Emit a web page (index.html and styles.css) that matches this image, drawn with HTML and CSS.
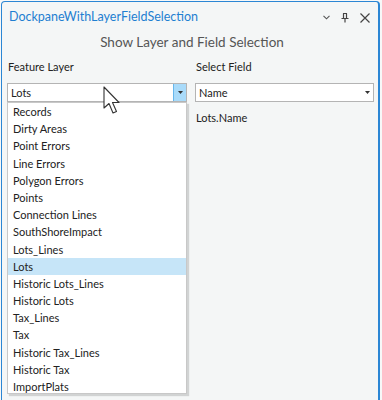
FILE: index.html
```html
<!DOCTYPE html>
<html>
  <head>
    <meta charset="utf-8">
    <title>DockpaneWithLayerFieldSelection</title>
    <link rel="stylesheet" href="styles.css">
  </head>
  <body>
    <div class="pane">
      <div class="titlebar">
        <span class="title">DockpaneWithLayerFieldSelection</span>
        <div class="controls">
          <svg width="7" height="5" viewBox="0 0 7 5"><path d="M0.5 0.8 L3.5 3.8 L6.5 0.8" fill="none" stroke="#555" stroke-width="1.1"/></svg>
          <svg width="8" height="10" viewBox="0 0 8 10"><path d="M2 0.5 H6 M2.5 0.5 V5 M5.5 0.5 V5 M0.5 5.5 H7.5 M4 5.5 V9.5" fill="none" stroke="#444" stroke-width="1.2"/></svg>
          <svg width="10" height="10" viewBox="0 0 10 10"><path d="M0.5 0.5 L9.5 9.5 M9.5 0.5 L0.5 9.5" fill="none" stroke="#444" stroke-width="1.2"/></svg>
        </div>
      </div>
      <div class="heading">Show Layer and Field Selection</div>
      <div class="fields">
        <div class="field">
          <label class="label">Feature Layer</label>
          <div class="combo">
            <span class="combo-text">Lots</span>
            <span class="drop drop-hot"><svg width="5" height="3" viewBox="0 0 5 3"><path d="M0 0 H5 L2.5 3 Z" fill="#333"/></svg></span>
          </div>
          <ul class="dropdown">
            <li>Records</li>
            <li>Dirty Areas</li>
            <li>Point Errors</li>
            <li>Line Errors</li>
            <li>Polygon Errors</li>
            <li>Points</li>
            <li>Connection Lines</li>
            <li>SouthShoreImpact</li>
            <li>Lots_Lines</li>
            <li class="selected">Lots</li>
            <li>Historic Lots_Lines</li>
            <li>Historic Lots</li>
            <li>Tax_Lines</li>
            <li>Tax</li>
            <li>Historic Tax_Lines</li>
            <li>Historic Tax</li>
            <li>ImportPlats</li>
          </ul>
        </div>
        <div class="field">
          <label class="label">Select Field</label>
          <div class="combo">
            <span class="combo-text">Name</span>
            <span class="drop"><svg width="5" height="3" viewBox="0 0 5 3"><path d="M0 0 H5 L2.5 3 Z" fill="#333"/></svg></span>
          </div>
          <div class="value">Lots.Name</div>
        </div>
      </div>
    </div>
    <!-- mouse pointer over the combo -->
    <svg class="pointer" width="20" height="30" viewBox="0 0 20 30">
      <path d="M1 1 L1 22 L6 17.5 L10 27 L13.5 25.5 L9.5 16.5 L16 16.5 Z" fill="#fff" stroke="#333" stroke-width="1.1" stroke-linejoin="round"/>
    </svg>
  </body>
</html>
```
FILE: styles.css
```css
html, body {
margin: 0;
padding: 0;
}

body {
font-family: Lato, "Noto Sans", sans-serif;
font-size: 11px;
color: #222;
background: #f7f8f8;
width: 382px;
height: 400px;
overflow: hidden;
}

.pane {
margin: 1px 0 0 1px;
width: 376px;
height: 420px;
border: 1px solid #2b86d4;
border-right-width: 2px;
border-radius: 4px 4px 0 0;
background: #f4f6f6;
}

.titlebar {
display: flex;
align-items: center;
justify-content: space-between;
height: 29px;
padding: 0 8px 0 7px;
}

.title {
font-size: 12.5px;
color: #1f7fd1;
}

.controls {
display: flex;
align-items: center;
gap: 11px;
padding-top: 2px;
}

.heading {
text-align: center;
font-size: 13.5px;
color: #555;
height: 24px;
line-height: 22px;
padding-left: 4px;
}

.fields {
display: flex;
gap: 8px;
padding: 0 5px 0 5px;
}

.field {
position: relative;
flex: 0 0 180px;
display: flex;
flex-direction: column;
}

.field + .field {
flex: 0 0 179px;
}

.label {
display: block;
height: 28px;
line-height: 24px;
padding-left: 1px;
}

.combo {
display: flex;
align-items: center;
justify-content: space-between;
height: 17px;
border: 1px solid #b4b4b4;
background: #fff;
}

.combo-text {
padding-left: 3px;
}

.drop {
display: flex;
align-items: center;
justify-content: center;
width: 12px;
height: 17px;
}

.drop-hot {
background: #a9dbfa;
border-left: 1px solid #67b7ec;
}

.value {
padding: 9px 0 0 1px;
}

.dropdown {
position: absolute;
top: 47px;
left: 0;
width: 178px;
height: 290px;
margin: 0;
padding: 0;
list-style: none;
background: #fff;
border: 1px solid #c8c8c8;
box-shadow: 2px 2px 1px rgba(0, 0, 0, 0.14);
}

.dropdown li {
height: 17.2px;
line-height: 17px;
padding-left: 5px;
}

.dropdown .selected {
background: #c6e5f8;
}

.pointer {
position: absolute;
left: 103px;
top: 86px;
}
```
